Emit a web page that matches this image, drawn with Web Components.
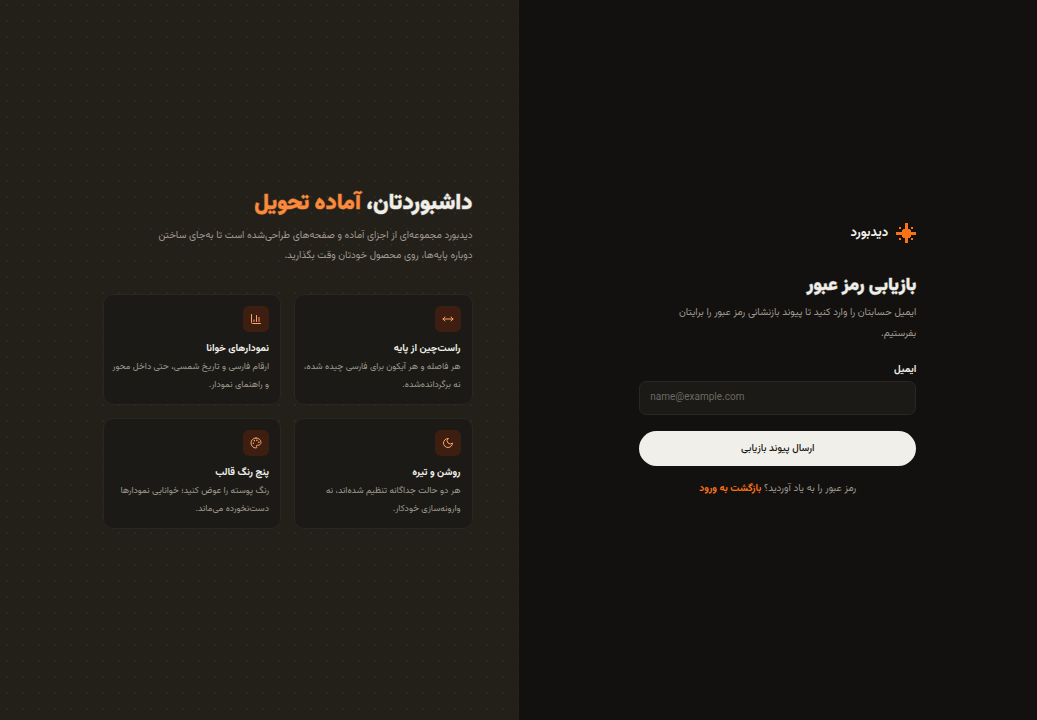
<!DOCTYPE html>
<html lang="fa" dir="rtl">
<head>
<meta charset="utf-8">
<meta name="viewport" content="width=device-width, initial-scale=1">
<title>بازیابی رمز عبور</title>
<style>
  :root {
    --bg: #12110f;
    --surface: #1b1a16;
    --muted-bg: #23201a;
    --border: #282722;
    --text: #f1efe9;
    --muted: #a09a91;
    --faint: #6d6963;
    --accent: #f97316;
    --accent-soft: #fb8a3c;
    --tint: #3d1e10;
  }
  body {
    margin: 0;
    background: var(--bg);
    color: var(--text);
    font-family: Vazirmatn, "Noto Sans", "DejaVu Sans", sans-serif;
    font-size: 10px;
  }
</style>
</head>
<body>
<auth-layout>
  <recovery-form slot="form"></recovery-form>
  <promo-panel slot="aside">
    <feature-card icon="arrows">
      <span slot="title">راست‌چین از پایه</span>
      هر فاصله و هر آیکون برای فارسی چیده شده، نه برگردانده‌شده.
    </feature-card>
    <feature-card icon="chart">
      <span slot="title">نمودارهای خوانا</span>
      ارقام فارسی و تاریخ شمسی، حتی داخل محور و راهنمای نمودار.
    </feature-card>
    <feature-card icon="moon">
      <span slot="title">روشن و تیره</span>
      هر دو حالت جداگانه تنظیم شده‌اند، نه وارونه‌سازی خودکار.
    </feature-card>
    <feature-card icon="palette">
      <span slot="title">پنج رنگ قالب</span>
      رنگ پوسته را عوض کنید؛ خوانایی نمودارها دست‌نخورده می‌ماند.
    </feature-card>
  </promo-panel>
</auth-layout>
<script>
  const define = (name, html, setup) => {
    customElements.define(name, class extends HTMLElement {
      constructor() {
        super();
        this.attachShadow({ mode: 'open' }).innerHTML = html;
      }
      connectedCallback() { if (setup) setup(this); }
    });
  };

  // Lucide-style strokes on a 24-unit grid
  const ICONS = {
    arrows: '<path d="m18 8 4 4-4 4"/><path d="M2 12h20"/><path d="m6 8-4 4 4 4"/>',
    chart: '<path d="M3 3v16a2 2 0 0 0 2 2h16"/><path d="M18 17V9"/><path d="M13 17V5"/><path d="M8 17v-3"/>',
    moon: '<path d="M12 3a6 6 0 0 0 9 9 9 9 0 1 1-9-9Z"/>',
    palette: '<circle cx="13.5" cy="6.5" r=".5"/><circle cx="17.5" cy="10.5" r=".5"/><circle cx="8.5" cy="7.5" r=".5"/><circle cx="6.5" cy="12.5" r=".5"/><path d="M12 2C6.500 2 2 6.500 2 12s4.500 10 10 10c.926 0 1.648-.746 1.648-1.688 0-.437-.18-.835-.437-1.125-.29-.289-.438-.652-.438-1.125a1.640 1.640 0 0 1 1.668-1.668h1.996c3.051 0 5.555-2.503 5.555-5.554C21.965 6.012 17.461 2 12 2z"/>'
  };

  define('auth-layout', `
    <style>
      :host { display: grid; grid-template-columns: 1fr 1fr; min-height: 100vh; }
      main, aside { display: flex; align-items: center; }
      main { justify-content: center; padding: 24px; }
      aside {
        padding: 24px 46px;
        background:
          radial-gradient(circle at 7px 5px, #2b2923 1px, transparent 1px) 0 0 / 16px 16px,
          var(--muted-bg);
      }
    </style>
    <main><slot name="form"></slot></main>
    <aside><slot name="aside"></slot></aside>
  `);

  define('brand-logo', `
    <style>
      :host { display: flex; align-items: center; gap: 8px; font-size: 13px; font-weight: 700; line-height: 20px; }
      svg { width: 20px; height: 20px; fill: var(--accent); }
    </style>
    <svg viewBox="0 0 20 20" aria-hidden="true" shape-rendering="crispEdges">
      <path d="M9 0h3v20h-3zM0 9h20v3h-20z"/>
      <path d="M7 6h7v1h1v7h-1v1h-7v-1h-1v-7h1z"/>
      <path d="M3 4h2v2h-2zM15 4h2v2h-2zM3 15h2v2h-2zM15 15h2v2h-2z"/>
    </svg>
    <span>دیدبورد</span>
  `);

  define('recovery-form', `
    <style>
      :host { display: block; width: 100%; max-width: 277px; }
      h1 {
        margin: 30px 0 3px; font-size: 18px; font-weight: 900; line-height: 26px;
        -webkit-text-stroke: 1px rgb(241 239 233 / 45%);
      }
      p { margin: 0; max-width: 260px; color: var(--muted); font-size: 10px; line-height: 21px; }
      form { display: flex; flex-direction: column; margin: 17px 0 14px; }
      label { font-size: 10px; font-weight: 700; line-height: 18px; }
      input {
        box-sizing: border-box; width: 100%; height: 34px; margin: 2px 0 16px; padding: 0 10px;
        border: 1px solid var(--border); border-radius: 7px; background: var(--surface);
        color: inherit; font: inherit; direction: ltr;
      }
      input::placeholder { color: var(--faint); opacity: 1; }
      button {
        height: 35px; border: 0; border-radius: 18px; background: var(--text); color: #161512;
        font: inherit; font-weight: 500;
      }
      .foot { max-width: none; text-align: center; line-height: 18px; }
      a { color: var(--accent); font-weight: 700; text-decoration: none; }
    </style>
    <brand-logo></brand-logo>
    <h1>بازیابی رمز عبور</h1>
    <p>ایمیل حسابتان را وارد کنید تا پیوند بازنشانی رمز عبور را برایتان بفرستیم.</p>
    <form>
      <label for="email">ایمیل</label>
      <input id="email" type="email" placeholder="name@example.com">
      <button type="button">ارسال پیوند بازیابی</button>
    </form>
    <p class="foot">رمز عبور را به یاد آوردید؟ <a href="#login">بازگشت به ورود</a></p>
  `);

  define('promo-panel', `
    <style>
      :host { display: block; width: 100%; max-width: 370px; }
      h2 {
        margin: 0 0 10px; font-size: 22px; font-weight: 900; line-height: 25px;
        -webkit-text-stroke: 1px rgb(241 239 233 / 45%);
      }
      em { color: var(--accent-soft); font-style: normal; -webkit-text-stroke-color: rgb(251 138 60 / 45%); }
      p { margin: 0 0 28px; max-width: 330px; color: var(--muted); font-size: 10px; line-height: 20px; }
      .grid { display: grid; grid-template-columns: 1fr 1fr; gap: 13px; }
    </style>
    <h2>داشبوردتان، <em>آماده تحویل</em></h2>
    <p>دیدبورد مجموعه‌ای از اجزای آماده و صفحه‌های طراحی‌شده است تا به‌جای ساختن دوباره پایه‌ها، روی محصول خودتان وقت بگذارید.</p>
    <div class="grid"><slot></slot></div>
  `);

  define('feature-card', `
    <style>
      :host {
        display: block; padding: 11px 11px 10px; padding-inline-end: 6px; border: 1px solid var(--border);
        border-radius: 10px; background: var(--surface);
      }
      .icon {
        display: grid; place-items: center; width: 26px; height: 26px; margin-bottom: 8px;
        border-radius: 6px; background: var(--tint);
      }
      svg { width: 12px; height: 12px; fill: none; stroke: #fba56b; stroke-width: 2; stroke-linecap: round; stroke-linejoin: round; }
      h3 { margin: 0; font-size: 10px; font-weight: 700; line-height: 18px; }
      p { margin: 0; color: var(--muted); font-size: 9px; line-height: 18px; }
    </style>
    <div class="icon"><svg viewBox="0 0 24 24" aria-hidden="true"></svg></div>
    <h3><slot name="title"></slot></h3>
    <p><slot></slot></p>
  `, el => { el.shadowRoot.querySelector('svg').innerHTML = ICONS[el.getAttribute('icon')]; });
</script>
</body>
</html>
